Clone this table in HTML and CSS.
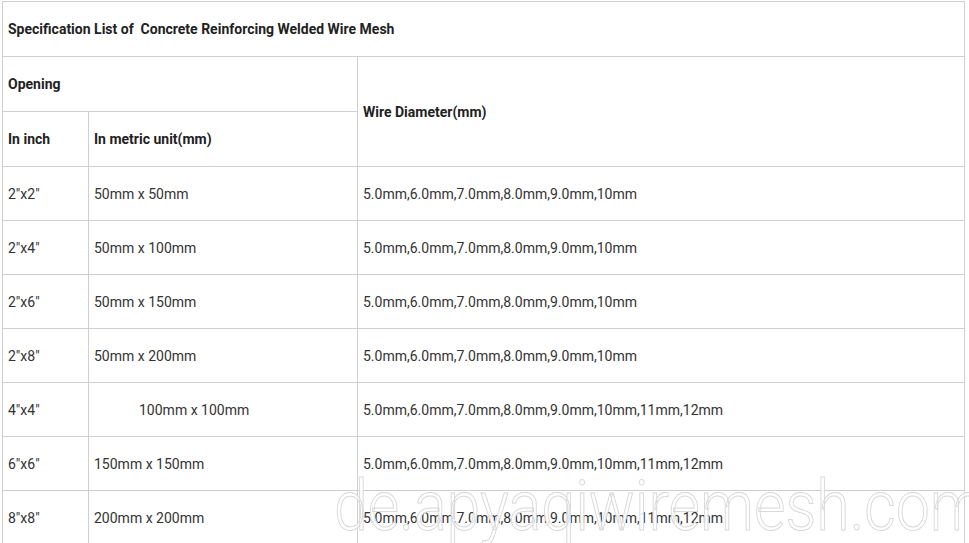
FILE: index.html
```html
<!DOCTYPE html>
<html>
<head>
<meta charset="utf-8">
<link rel="stylesheet" href="styles.css">
</head>
<body>
<div class="page">
<table class="spec">
  <colgroup><col class="c1"><col class="c2"><col class="c3"></colgroup>
  <tr class="head"><th colspan="3" class="title">Specification List of&nbsp; Concrete Reinforcing Welded Wire Mesh</th></tr>
  <tr class="head"><th colspan="2">Opening</th><th rowspan="2">Wire Diameter(mm)</th></tr>
  <tr class="head"><th>In inch</th><th>In metric unit(mm)</th></tr>
  <tr><td>2"x2"</td><td>50mm x 50mm</td><td>5.0mm,6.0mm,7.0mm,8.0mm,9.0mm,10mm</td></tr>
  <tr><td>2"x4"</td><td>50mm x 100mm</td><td>5.0mm,6.0mm,7.0mm,8.0mm,9.0mm,10mm</td></tr>
  <tr><td>2"x6"</td><td>50mm x 150mm</td><td>5.0mm,6.0mm,7.0mm,8.0mm,9.0mm,10mm</td></tr>
  <tr><td>2"x8"</td><td>50mm x 200mm</td><td>5.0mm,6.0mm,7.0mm,8.0mm,9.0mm,10mm</td></tr>
  <tr><td>4"x4"</td><td class="indent">100mm x 100mm</td><td>5.0mm,6.0mm,7.0mm,8.0mm,9.0mm,10mm,11mm,12mm</td></tr>
  <tr><td>6"x6"</td><td>150mm x 150mm</td><td>5.0mm,6.0mm,7.0mm,8.0mm,9.0mm,10mm,11mm,12mm</td></tr>
  <tr><td>8"x8"</td><td>200mm x 200mm</td><td>5.0mm,6.0mm,7.0mm,8.0mm,9.0mm,10mm,11mm,12mm</td></tr>
</table>
<div class="watermark">de.apyaqiwiremesh.com</div>
</div>
</body>
</html>
```

FILE: styles.css
```css
html, body {
  margin: 0;
  padding: 0;
  background: #fff;
  overflow: hidden;
}
.page {
  position: relative;
  padding: 1px 0 0 2px;
  width: 969px;
  height: 543px;
  box-sizing: border-box;
  overflow: hidden;
}
.spec {
  border-collapse: collapse;
  width: 963px;
  table-layout: fixed;
  font-family: Roboto, "Liberation Sans", sans-serif;
  color: #333;
}
.c1 { width: 86px; }
.c2 { width: 269px; }
.spec th, .spec td {
  border: 1px solid #cfcfcf;
  height: 53px;
  padding: 0 0 0 5px;
  text-align: left;
  vertical-align: middle;
}
.spec .head th {
  height: 54px;
}
.spec th {
  font-weight: 700;
  font-size: 14px;
  color: #222;
}
.spec td {
  font-size: 14px;
  font-weight: 400;
}
.spec td.indent {
  padding-left: 50px;
}
.watermark {
  position: absolute;
  left: 334px;
  top: 465px;
  font-family: Roboto, "Liberation Sans", sans-serif;
  font-weight: 300;
  font-size: 70px;
  color: rgba(255,255,255,0.85);
  -webkit-text-stroke: 1px #d8d8d8;
  white-space: nowrap;
  transform: scaleX(0.87);
  transform-origin: left top;
  pointer-events: none;
}
```
